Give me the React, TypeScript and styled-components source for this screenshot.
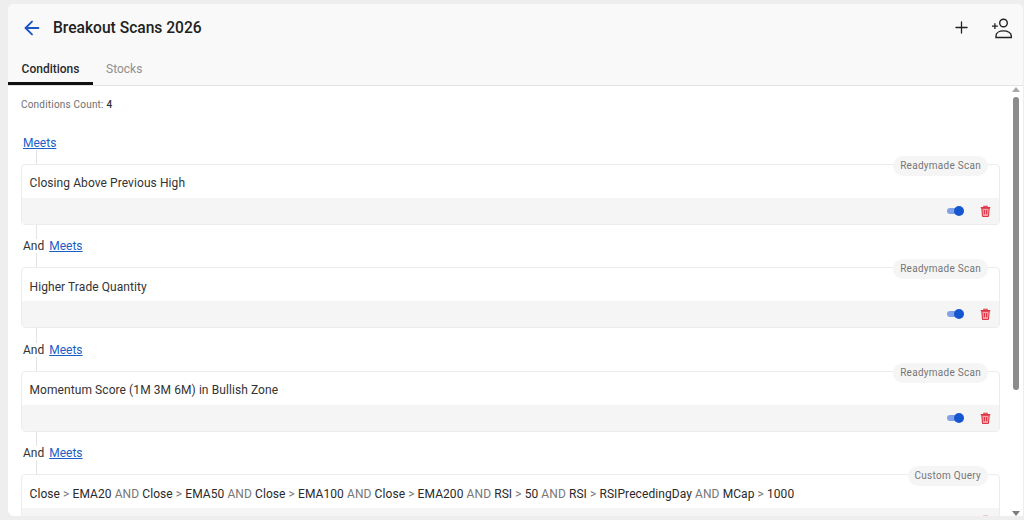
import React from "react";
import styled, { createGlobalStyle } from "styled-components";
import { ArrowLeft, Plus } from "lucide-react";

const Global = createGlobalStyle`
  html, body { margin: 0; padding: 0; height: 100%; background: #eeeeee; overflow: hidden; }
  body { font-family: Roboto, "Liberation Sans", sans-serif; color: #212529; }
`;

const Page = styled.div`
  height: 520px;
  padding: 4px 1px 4px 8px;
  box-sizing: border-box;
`;
const Panel = styled.div`
  position: relative;
  height: 100%;
  display: flex;
  flex-direction: column;
  background: #fff;
  border-radius: 6px 6px 0 6px;
  overflow: hidden;
`;
const Header = styled.header`
  height: 81px;
  flex: none;
  background: #f9f9f9;
  border-bottom: 1px solid #e4e4e4;
  display: flex;
  flex-direction: column;
`;
const TopBar = styled.div`
  height: 49px;
  display: flex;
  align-items: center;
  padding: 0 9px 2px 13px;
  box-sizing: border-box;
  flex: none;
`;
const BackIcon = styled(ArrowLeft)`
  color: #1a56c4;
  margin-right: 10px;
`;
const Title = styled.h1`
  flex: 1;
  margin: 0;
  font-size: 15.6px;
  line-height: 20px;
  font-weight: 500;
  color: #212121;
`;
const Actions = styled.div`
  display: flex;
  align-items: center;
  gap: 21px;
`;
const Tabs = styled.nav`
  display: flex;
  flex: 1;
`;
const Tab = styled.div<{ $active?: boolean }>`
  width: ${(p) => (p.$active ? "85px" : "auto")};
  padding: 3px ${(p) => (p.$active ? "0" : "13px")} 0;
  box-sizing: border-box;
  height: 32px;
  display: flex;
  align-items: center;
  justify-content: center;
  font-size: 12px;
  font-weight: ${(p) => (p.$active ? 500 : 400)};
  color: ${(p) => (p.$active ? "#2b2b2b" : "#8f8f8f")};
  border-bottom: 3px solid ${(p) => (p.$active ? "#111" : "transparent")};
`;
const Scroll = styled.main`
  flex: 1;
  min-height: 0;
  overflow: hidden;
  padding: 0 23px 0 13px;
`;
const ScrollRail = styled.div`
  position: absolute;
  right: 0;
  top: 82px;
  bottom: 0;
  width: 14px;
  background: #fff;
`;
const ScrollArrow = styled.span<{ $down?: boolean }>`
  position: absolute;
  left: 3px;
  ${(p) => (p.$down ? "bottom: 0; border-top: 5px solid #7d7d7d;" : "top: 1px; border-bottom: 5px solid #a8a8a8;")}
  width: 0;
  height: 0;
  border-left: 4px solid transparent;
  border-right: 4px solid transparent;
`;
const ScrollThumb = styled.span`
  position: absolute;
  left: 4px;
  top: 11px;
  width: 6px;
  height: 293px;
  border-radius: 3px;
  background: #8c8c8c;
`;
const Count = styled.p`
  margin: 12px 0 0;
  font-size: 10px;
  line-height: 13px;
  letter-spacing: 0.2px;
  color: #6f6f6f;
  b { font-weight: 500; color: #333; }
`;
const ConditionList = styled.div`
  margin-top: 19.25px;
`;
const Condition = styled.section`
  padding-bottom: 9px;
`;
const Joiner = styled.div<{ $first?: boolean }>`
  position: relative;
  height: 24.5px;
  display: flex;
  align-items: center;
  padding-left: 2px;
  gap: 5px;
  font-size: 12px;
  color: #333;
  &::before {
    content: "";
    position: absolute;
    left: 15px;
    top: ${(p) => (p.$first ? "18px" : "-9px")};
    bottom: -9px;
    width: 1px;
    background: #e3e3e3;
  }
`;
const JoinText = styled.span`
  position: relative;
  z-index: 1;
  background: #fff;
`;
const MeetsLink = styled.a`
  position: relative;
  z-index: 1;
  background: #fff;
  color: #1a5fc8;
  text-decoration: underline;
`;
const Card = styled.article`
  position: relative;
  margin-top: 9px;
  border: 1px solid #ececec;
  border-radius: 4px;
  background: #fff;
`;
const Badge = styled.span`
  position: absolute;
  top: -9px;
  right: 11px;
  height: 20px;
  padding: 0 7px;
  border-radius: 10px;
  background: #f5f5f5;
  color: #757575;
  font-size: 10px;
  line-height: 20px;
  letter-spacing: 0.27px;
`;
const Body = styled.div`
  height: 33px;
  display: flex;
  align-items: center;
  padding: 4px 7.5px 0;
  box-sizing: border-box;
  font-size: 12px;
  letter-spacing: 0.08px;
  color: #333;
`;
const Op = styled.span`
  color: #777;
`;
const Ind = styled.span`
  color: #2a2a2a;
`;
const Query = styled.div`
  white-space: pre-wrap;
`;
const Footer = styled.div`
  height: 26px;
  display: flex;
  align-items: center;
  justify-content: flex-end;
  gap: 17px;
  padding: 0 8.5px;
  background: #f5f5f5;
`;
const Toggle = styled.span`
  position: relative;
  width: 16px;
  height: 6px;
  border-radius: 3px;
  background: #7fa3e6;
  &::after {
    content: "";
    position: absolute;
    right: 0;
    top: -2px;
    width: 10px;
    height: 10px;
    border-radius: 50%;
    background: #1657cf;
    margin-right: -1px;
  }
`;

const DeleteIcon = () => (
  <svg width="11" height="12" viewBox="0 0 12 13" fill="none" aria-hidden>
    <path d="M2 3.5h8l-.7 8.2a.8.8 0 0 1-.8.8h-5a.8.8 0 0 1-.8-.8z" fill="#f2a3aa" stroke="#dc3545" strokeWidth="1.2" />
    <path d="M.8 2.8h10.4M4.2 2.5V1.3h3.6v1.2M4.8 5.5v4.5M7.2 5.5v4.5" stroke="#dc3545" strokeWidth="1.2" />
  </svg>
);

const PersonPlus = () => (
  <svg width="22" height="22" viewBox="0 0 22 22" fill="none" stroke="#222" strokeWidth="1.4" aria-hidden>
    <circle cx="11.5" cy="6" r="3.8" />
    <path d="M4 20.5v-1.6c0-3 3.3-5 7.5-5s7.8 2 7.8 5v1.6z" />
    <path d="M0 9.2h5.8M2.9 6.3v5.8" strokeWidth="1.3" />
  </svg>
);

const scans = [
  { badge: "Readymade Scan", text: "Closing Above Previous High" },
  { badge: "Readymade Scan", text: "Higher Trade Quantity" },
  { badge: "Readymade Scan", text: "Momentum Score (1M 3M 6M) in Bullish Zone" },
];

const query: [string, string][] = [
  ["Close", " > "], ["EMA20", " AND "], ["Close", " > "], ["EMA50", " AND "], ["Close", " > "],
  ["EMA100", " AND "], ["Close", " > "], ["EMA200", " AND "], ["RSI", " > "], ["50", " AND "],
  ["RSI", " > "], ["RSIPrecedingDay", " AND "], ["MCap", " > "], ["1000", ""],
];

const Controls = () => (
  <Footer>
    <Toggle />
    <DeleteIcon />
  </Footer>
);

export default function App() {
  return (
    <Page>
      <Global />
      <Panel>
        <Header>
          <TopBar>
            <BackIcon size={22} strokeWidth={2} />
            <Title>Breakout Scans 2026</Title>
            <Actions>
              <Plus size={19} strokeWidth={1.6} color="#222" />
              <PersonPlus />
            </Actions>
          </TopBar>
          <Tabs>
            <Tab $active>Conditions</Tab>
            <Tab>Stocks</Tab>
          </Tabs>
        </Header>
        <Scroll>
          <Count>Conditions Count: <b>4</b></Count>
          <ConditionList>
            {scans.map((s, i) => (
              <Condition key={s.text}>
                <Joiner $first={i === 0}>
                  {i > 0 && <JoinText>And</JoinText>}
                  <MeetsLink href="#">Meets</MeetsLink>
                </Joiner>
                <Card>
                  <Badge>{s.badge}</Badge>
                  <Body>{s.text}</Body>
                  <Controls />
                </Card>
              </Condition>
            ))}
            <Condition>
              <Joiner>
                <JoinText>And</JoinText>
                <MeetsLink href="#">Meets</MeetsLink>
              </Joiner>
              <Card>
                <Badge>Custom Query</Badge>
                <Body>
                  <Query>
                    {query.map(([a, b], i) => (
                      <React.Fragment key={i}>
                        <Ind>{a}</Ind>
                        <Op>{b}</Op>
                      </React.Fragment>
                    ))}
                  </Query>
                </Body>
                <Controls />
              </Card>
            </Condition>
          </ConditionList>
        </Scroll>
        <ScrollRail>
          <ScrollArrow />
          <ScrollThumb />
          <ScrollArrow $down />
        </ScrollRail>
      </Panel>
    </Page>
  );
}
